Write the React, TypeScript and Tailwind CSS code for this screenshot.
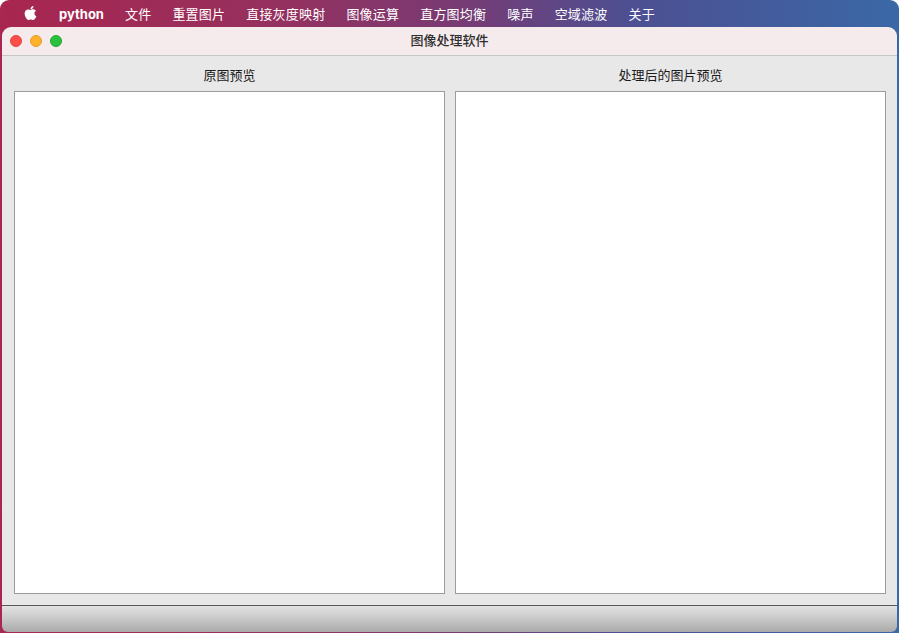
import React from "react";
import { FaApple } from "react-icons/fa";

const menus = ["文件", "重置图片", "直接灰度映射", "图像运算", "直方图均衡", "噪声", "空域滤波", "关于"];

export default function App() {
  return (
    <div
      className="w-[899px] h-[633px] bg-white overflow-hidden"
      style={{ fontFamily: '"Inter", "Noto Sans CJK SC", sans-serif' }}
    >
      <div className="w-full h-full rounded-t-[9px] flex flex-col bg-[linear-gradient(90deg,#a8264f_0%,#96305e_30%,#7a3a72_50%,#4d4f92_70%,#3a68a6_100%)]">
        {/* menu bar */}
        <div className="h-[27px] shrink-0 flex items-center text-white text-[13px] pl-[23px] pt-[2px]">
          <FaApple className="w-[15px] h-[16px] mb-[3px]" />
          <span className="ml-[21px] font-bold">python</span>
          {menus.map((m) => (
            <span key={m} className="ml-[21px] tracking-[0.2px]">
              {m}
            </span>
          ))}
        </div>
        {/* window */}
        <div className="mx-[2px] flex-1 flex flex-col rounded-t-[9px] overflow-hidden rounded-b-[6px] mb-[1px]">
          <div className="h-[29px] shrink-0 bg-[#f6ebec] border-b border-[#c6c6c6] flex items-center relative">
            <div className="flex items-center gap-[8px] pl-[8px]">
              <div className="w-[12px] h-[12px] rounded-full bg-[#fe4e48] border border-[#e2443e]" />
              <div className="w-[12px] h-[12px] rounded-full bg-[#feb12a] border border-[#e29d28]" />
              <div className="w-[12px] h-[12px] rounded-full bg-[#2ac23c] border border-[#22a530]" />
            </div>
            <div className="absolute inset-0 flex items-center justify-center text-[13px] font-medium text-[#2e2e2e]">
              图像处理软件
            </div>
          </div>
          <div className="flex-1 bg-[#e8e8e8] flex gap-[10px] pl-[12px] pr-[11px] pt-[8px] pb-[11px]">
            <div className="flex-1 flex flex-col">
              <div className="h-[27px] pb-[4px] flex items-center justify-center text-[13px] text-[#1a1a1a]">原图预览</div>
              <div className="flex-1 bg-white border border-[#9c9c9c]" />
            </div>
            <div className="flex-1 flex flex-col">
              <div className="h-[27px] pb-[4px] flex items-center justify-center text-[13px] text-[#1a1a1a]">处理后的图片预览</div>
              <div className="flex-1 bg-white border border-[#9c9c9c]" />
            </div>
          </div>
          <div className="h-[27px] shrink-0 border-t border-[#5a5a5a] bg-[linear-gradient(180deg,#e2e2e2_0%,#c8c8c8_50%,#a9a9a9_100%)]" />
        </div>
      </div>
    </div>
  );
}
